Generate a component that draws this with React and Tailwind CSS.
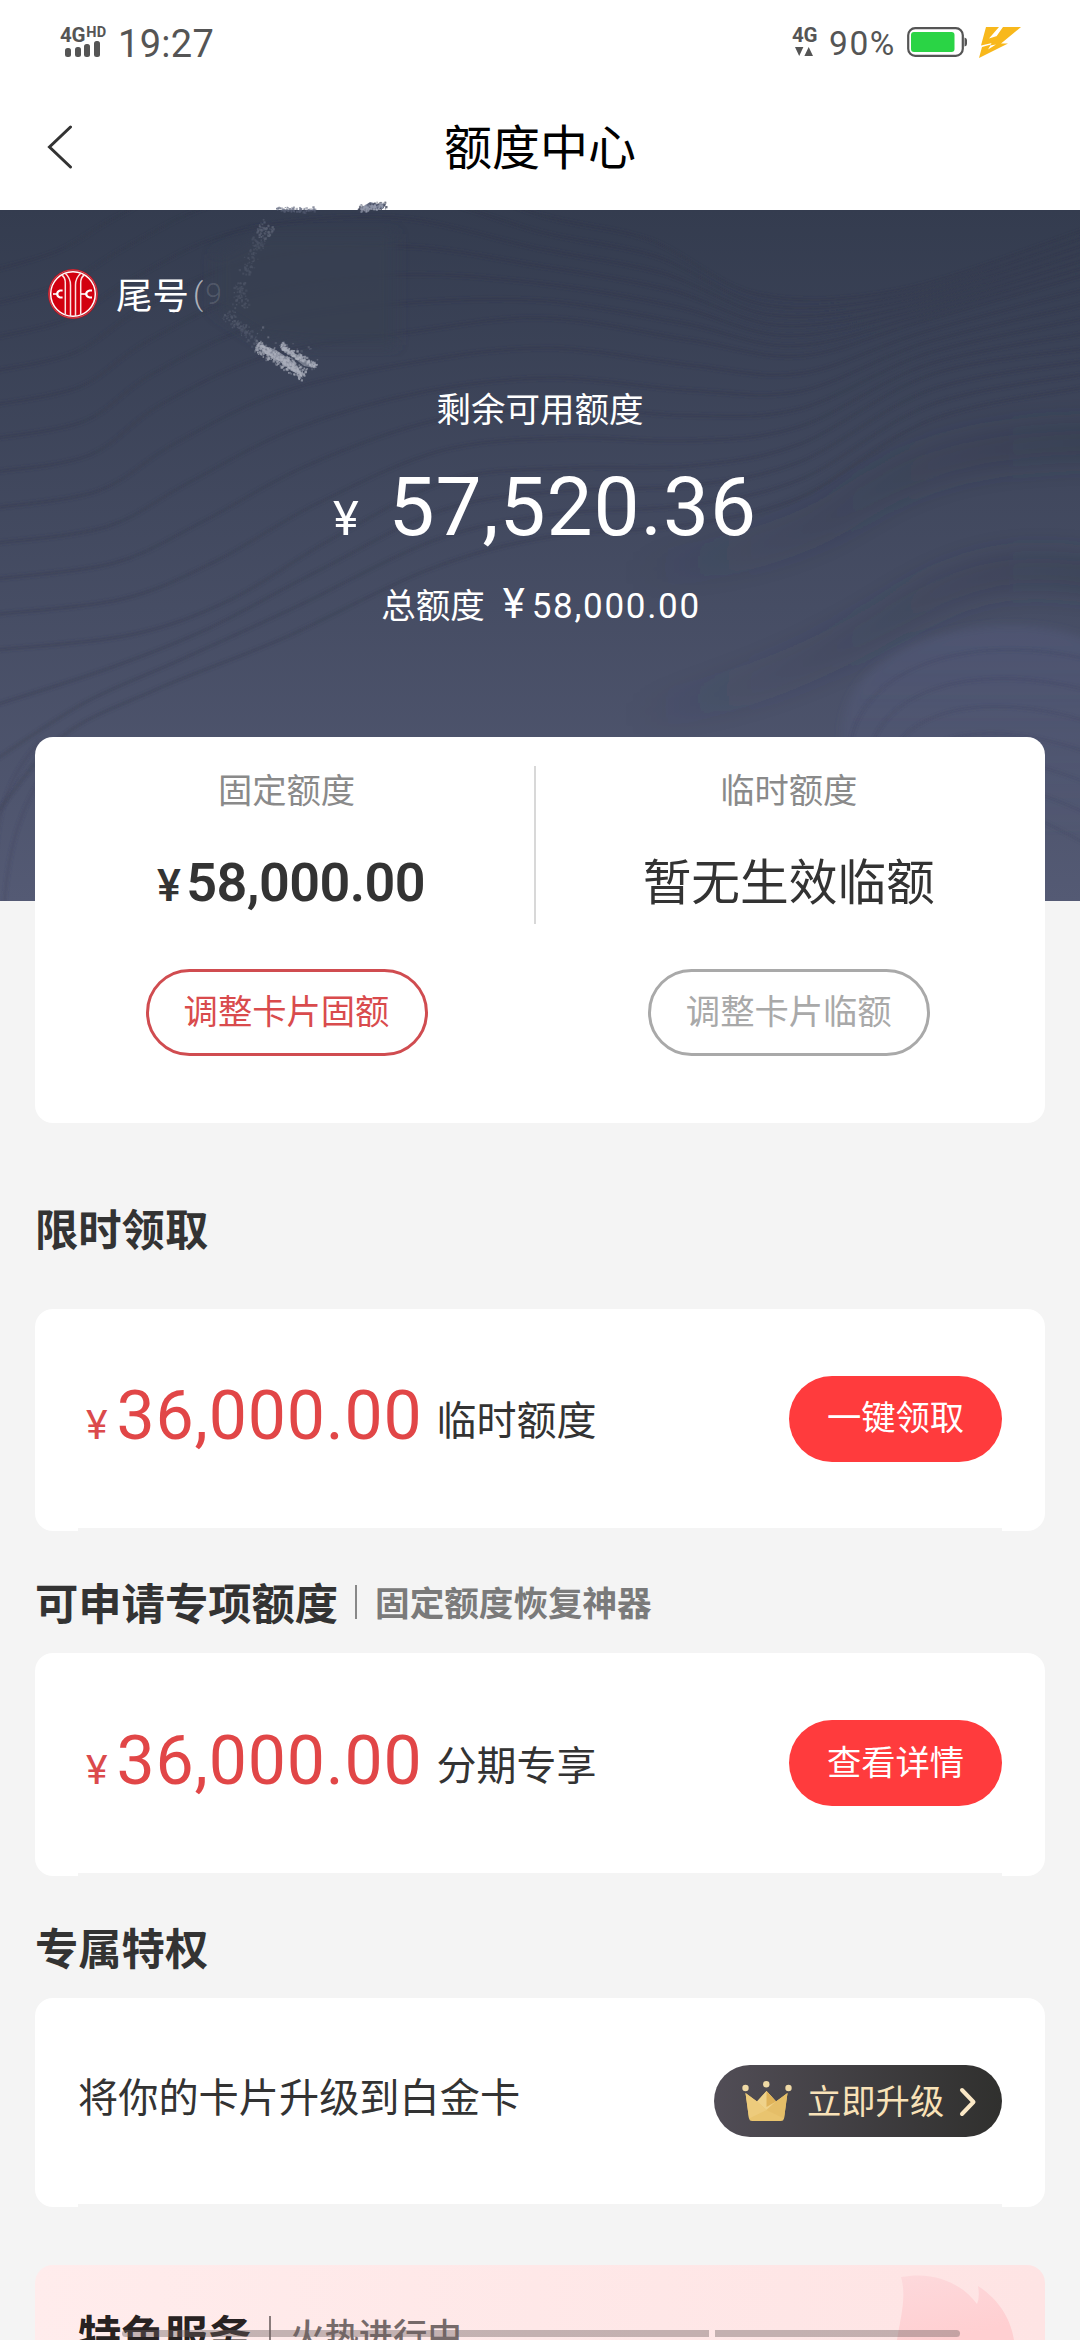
import React from "react";

const CJK = 'font-["Noto_Sans_CJK_SC",sans-serif]';
const NUM = 'font-["Roboto",sans-serif]';

function lerpPoints(a, b, t) {
  return a.map(([x, y], i) => [x + (b[i][0] - x) * t, y + (b[i][1] - y) * t]);
}

function smooth(points) {
  let d = `M${points[0][0]} ${points[0][1]}`;
  for (let i = 0; i < points.length - 1; i++) {
    const p0 = points[i - 1] || points[i];
    const p1 = points[i];
    const p2 = points[i + 1];
    const p3 = points[i + 2] || p2;
    d += ` C${p1[0] + (p2[0] - p0[0]) / 6} ${p1[1] + (p2[1] - p0[1]) / 6} ${p2[0] - (p3[0] - p1[0]) / 6} ${p2[1] - (p3[1] - p1[1]) / 6} ${p2[0]} ${p2[1]}`;
  }
  return d;
}

const CURVE_A = [[-5, 60], [60, 40], [120, 5], [220, -40], [380, -50], [540, 5], [650, 30], [760, 85], [900, 80], [1085, 20]];
const CURVE_B = [[-5, 262], [90, 245], [160, 195], [270, 145], [410, 122], [545, 108], [690, 130], [800, 146], [920, 112], [1085, 65]];
const CURVE_C = [[-5, 440], [130, 425], [230, 390], [330, 330], [450, 270], [570, 258], [690, 256], [800, 234], [930, 165], [1085, 138]];
const CURVE_D = [[-5, 660], [40, 560], [130, 510], [270, 460], [420, 390], [540, 350], [680, 335], [800, 305], [930, 225], [1085, 190]];

function Waves() {
  const lines = [];
  for (let i = 0; i < 6; i++) lines.push(smooth(lerpPoints(CURVE_A, CURVE_B, i / 6)));
  for (let i = 0; i < 5; i++) lines.push(smooth(lerpPoints(CURVE_B, CURVE_C, i / 5)));
  for (let i = 0; i < 4; i++) lines.push(smooth(lerpPoints(CURVE_C, CURVE_D, i / 4)));
  return (
    <svg className="absolute inset-0 h-full w-full" viewBox="0 0 1080 691" preserveAspectRatio="none">
      <defs>
        <linearGradient id="ridge" gradientUnits="userSpaceOnUse" x1="620" y1="0" x2="1080" y2="0">
          <stop offset="0" stopColor="#2f3548" stopOpacity="0" />
          <stop offset="1" stopColor="#2f3548" stopOpacity="0.32" />
        </linearGradient>
        <linearGradient id="swirl" x1="0" y1="0" x2="0" y2="1">
          <stop offset="0" stopColor="#5b6288" stopOpacity="0.35" />
          <stop offset="1" stopColor="#5b6288" stopOpacity="0.05" />
        </linearGradient>
        <filter id="soft"><feGaussianBlur stdDeviation="1.5" /></filter>
        <filter id="softer"><feGaussianBlur stdDeviation="4" /></filter>
        <filter id="shade" x="-20%" y="-40%" width="140%" height="180%"><feGaussianBlur stdDeviation="12" /></filter>
      </defs>
      <g fill="none" stroke="#2a3044" strokeOpacity="0.26" strokeWidth="4" filter="url(#soft)">
        {lines.map((d, i) => <path key={i} d={d} />)}
      </g>
      <g fill="none" stroke="url(#ridge)" strokeWidth="40" filter="url(#shade)">
        <path d="M600 368C720 352 790 332 840 302C905 260 960 232 1110 232" />
        <path d="M600 512C730 488 810 458 905 400C970 362 1020 352 1110 368" />
      </g>
      <path d="M842 540C835 480 880 440 940 425C1000 410 1050 414 1090 430V620H860Z" fill="url(#swirl)" filter="url(#softer)" />
      <g fill="none" stroke="#363d57" strokeOpacity="0.2" strokeWidth="3.5" filter="url(#soft)">
        {[0, 1, 2, 3, 4, 5, 6].map((i) => (
          <path key={i} d={`M${850 + i * 18} ${545 + i * 12}C${850 + i * 20} ${465 + i * 18} ${960 + i * 10} ${418 + i * 30} 1090 ${450 + i * 31}`} />
        ))}
      </g>
      <g fill="none" stroke="#363d57" strokeOpacity="0.25" strokeWidth="3.5" filter="url(#soft)">
        <path d="M-4 640C0 580 20 555 40 530" />
        <path d="M4 700C8 630 24 590 50 555" />
      </g>
    </svg>
  );
}

function speckles(seed, count, x0, y0, x1, y1, spread) {
  let s = seed;
  const rnd = () => {
    s = (s * 16807) % 2147483647;
    return s / 2147483647;
  };
  const out = [];
  for (let i = 0; i < count; i++) {
    const t = rnd();
    const off = (rnd() + rnd() - 1) * spread;
    const len = Math.hypot(x1 - x0, y1 - y0);
    out.push([
      x0 + (x1 - x0) * t - ((y1 - y0) / len) * off,
      y0 + (y1 - y0) * t + ((x1 - x0) / len) * off,
      1 + rnd() * 1.4,
      0.4 + rnd() * 0.6,
    ]);
  }
  return out;
}

function Speckle({ dots, fill, opacity }) {
  return (
    <g fill={fill} opacity={opacity}>
      {dots.map(([x, y, r, o], i) => <rect key={i} x={x} y={y} width={r} height={r} opacity={o} />)}
    </g>
  );
}

function Smudge() {
  return (
    <svg className="absolute left-[180px] top-[-14px] h-[200px] w-[240px]" viewBox="180 196 240 200">
      <defs>
        <filter id="patch"><feGaussianBlur stdDeviation="7" /></filter>
      </defs>
      <path d="M215 255L260 234H395V345H318L262 340L215 310Z" fill="#383f51" opacity="0.8" filter="url(#patch)" />
      <Speckle dots={speckles(11, 60, 258, 226, 270, 234, 9)} fill="#8a90a1" opacity="0.4" />
      <Speckle dots={speckles(21, 90, 258, 238, 246, 274, 9)} fill="#8a90a1" opacity="0.2" />
      <Speckle dots={speckles(31, 70, 240, 282, 240, 308, 9)} fill="#8a90a1" opacity="0.22" />
      <Speckle dots={speckles(41, 100, 226, 312, 256, 342, 8)} fill="#8a90a1" opacity="0.28" />
      <path d="M256 343L268 347L276 350L288 358L300 370L303 378L298 374L290 370L278 360L266 354Z" fill="#a3a7b5" opacity="0.7" />
      <path d="M279 345L290 350L302 358L316 364L314 368L304 366L294 358L284 352Z" fill="#a3a7b5" opacity="0.55" />
      <Speckle dots={speckles(51, 340, 256, 345, 304, 374, 8)} fill="#b4b8c4" opacity="0.8" />
      <Speckle dots={speckles(61, 130, 280, 345, 316, 366, 4)} fill="#b9bdc9" opacity="0.8" />
      <Speckle dots={speckles(71, 40, 256, 340, 318, 360, 18)} fill="#a3a7b5" opacity="0.4" />
      <path d="M357 210L364 206L370 202L378 204L386 204L383 209Z" fill="#6c738a" />
      <Speckle dots={speckles(81, 90, 358, 209, 385, 204, 5)} fill="#3a4053" opacity="0.8" />
      <Speckle dots={speckles(91, 90, 360, 208, 382, 205, 4)} fill="#9aa0b2" opacity="0.9" />
      <Speckle dots={speckles(101, 90, 276, 209, 316, 209, 3)} fill="#596077" opacity="0.8" />
    </svg>
  );
}

function StatusBar() {
  return (
    <div className={`flex h-[84px] shrink-0 items-start justify-between pl-[60px] pr-[58px] pt-[27px] text-[#555] ${NUM}`}>
      <div className="flex">
        <div className="w-[58px]">
          <div className="flex h-[15px] items-start font-bold">
            <span className="text-[20.5px] leading-[16px] tracking-[-0.3px]">4G</span>
            <span className="pl-px text-[14.5px] leading-[11px] tracking-[0.4px]">HD</span>
          </div>
          <div className="ml-[5px] flex h-[15px] items-end gap-[3.6px]">
            <i className="h-[9px] w-[6px] rounded-[2.5px] bg-[#555]" />
            <i className="h-[10px] w-[6px] rounded-[2.5px] bg-[#555]" />
            <i className="h-[13px] w-[6px] rounded-[2.5px] bg-[#555]" />
            <i className="h-[16px] w-[6px] rounded-[2.5px] bg-[#555]" />
          </div>
        </div>
        <span className="pt-[2px] text-[38px] leading-[30px] tracking-[0.3px]">19:27</span>
      </div>
      <div className="flex">
        <div className="w-[37px]">
          <div className="text-[20.5px] font-bold leading-[16px] tracking-[-0.3px]">4G</div>
          <svg className="ml-[3px] mt-[4px] h-[9px] w-[18px]" viewBox="0 0 18 9" fill="#555"><path d="M0 0H8.4L4.2 9Z M9.4 9H18L13.7 0Z" /></svg>
        </div>
        <span className="w-[78px] pt-px text-[33.5px] leading-[31px] tracking-[1.6px]">90%</span>
        <svg className="h-[30px] w-[61px]" viewBox="0 0 61 30">
          <rect x="1.2" y="1.2" width="54.6" height="27.6" rx="7" fill="#fff" stroke="#555" strokeWidth="2.2" />
          <rect x="4" y="5" width="43.5" height="20" rx="3" fill="#2ad445" />
          <path d="M57.5 10.5Q60 11 60 13V17Q60 19 57.5 19.5Z" fill="#555" />
        </svg>
        <svg className="ml-[11px] h-[31px] w-[43px]" viewBox="0 0 43 31" fill="#f8b81c">
          <path d="M7 0H20L10 11.5L18 9L13 16L2 18.5Z M24 0H42L22 16.5H29L0 31L3 20L12 17.5L9 22.5L17 17.5L11 18.5Z" />
        </svg>
      </div>
    </div>
  );
}

function NavBar() {
  return (
    <div className="grid h-[126px] shrink-0 grid-cols-[200px_1fr_200px] items-start">
      <svg className="ml-[47px] mt-[41px] h-[44px] w-[26px]" viewBox="0 0 26 44" fill="none" stroke="#333" strokeWidth="3" strokeLinecap="round">
        <path d="M23.5 2L2.5 22L23.5 42" />
      </svg>
      <h1 className="mt-[28px] text-center text-[48px] leading-[64px] text-black">额度中心</h1>
    </div>
  );
}

function BankLogo() {
  return (
    <svg className="h-[52px] w-[52px]" viewBox="0 0 52 52" fill="none">
      <circle cx="26" cy="26" r="25" fill="#b80f1c" />
      <circle cx="26" cy="26" r="24" stroke="#e0606a" strokeWidth="0.7" />
      <circle cx="26" cy="26" r="22.3" fill="#d2000f" stroke="#fff" strokeWidth="1.5" />
      <g stroke="#fbe3e3" strokeWidth="1.5">
        <path d="M14.5 7Q18.3 9 18.3 15V46.5" />
        <path d="M18 5Q23.5 10 23.5 17V48" />
        <path d="M37.5 7Q33.7 9 33.7 15V46.5" />
        <path d="M34 5Q28.5 10 28.5 17V48" />
      </g>
      <g stroke="#fff" strokeWidth="2.2">
        <path d="M15.6 22.5H13Q10.2 23.5 10.2 26T13 29.5H15.6" />
        <path d="M45 22.5H42.6Q39.2 23.5 39.2 26T42.6 29.5H45" />
        <path d="M6 26H10" strokeWidth="1.6" />
        <path d="M34 26H39" strokeWidth="1.6" />
      </g>
    </svg>
  );
}

function Hero() {
  return (
    <section className="relative h-[691px] shrink-0 bg-linear-to-b from-[#343c4f] to-[#545a74] text-white">
      <Waves />
      <Smudge />
      <div className="relative flex h-[168px] items-center pl-[47px]">
        <BankLogo />
        <div className="flex items-center pl-[17px] text-[36.5px] leading-[50px]">
          尾号
          <span className={`pl-[4px] text-[32px] font-light text-white/60 ${NUM}`}>(</span>
          <span className={`pl-[2px] text-[30px] font-light text-white/15 ${NUM}`}>9</span>
        </div>
      </div>
      <div className="relative flex flex-col items-center">
        <p className="mt-[4px] text-[34.5px] leading-[50px]">剩余可用额度</p>
        <p className={`mt-[25px] flex items-baseline pl-[10px] text-[82px] leading-[100px] tracking-[0.9px] ${NUM}`}>
          <span className="mr-[29px] text-[49px]">¥</span>57,520.36
        </p>
        <p className="mt-[9px] flex items-baseline pl-[2px] text-[34.5px] leading-[50px]">
          总额度
          <span className={`ml-[18px] mr-[7px] text-[42px] ${NUM}`}>¥</span>
          <span className={`text-[35px] tracking-[1.7px] ${NUM}`}>58,000.00</span>
        </p>
      </div>
    </section>
  );
}

function LimitColumn({ label, children, action, tone }) {
  return (
    <div className="flex flex-1 flex-col items-center">
      <p className="text-[34.3px] leading-[50px] text-[#8a8a8a]">{label}</p>
      <div className="mt-[34px] flex h-[64px] items-center justify-center text-[#333]">{children}</div>
      <button className={`mt-[58px] h-[87px] w-[282px] rounded-full border-3 pb-[8px] text-[34.3px] leading-[50px] ${tone}`}>{action}</button>
    </div>
  );
}

function SummaryCard() {
  return (
    <section className="relative mx-[35px] -mt-[164px] flex h-[386px] shrink-0 rounded-[18px] bg-white pt-[26px]">
      <div className="flex w-[499px] pl-[4px]">
        <LimitColumn label="固定额度" action="调整卡片固额" tone="border-[#d04c50] text-[#d94b4d]">
          <p className={`flex items-baseline pl-[9px] pt-[10px] text-[54px] font-semibold leading-[64px] tracking-[-0.6px] ${NUM}`}>
            <span className="mr-[6px] text-[45px] font-medium">¥</span>58,000.00
          </p>
        </LimitColumn>
      </div>
      <div className="mt-[3px] h-[158px] w-[1.5px] bg-[#d8d8d8]" />
      <div className="flex flex-1 pr-[3px]">
        <LimitColumn label="临时额度" action="调整卡片临额" tone="border-[#a9a9a9] text-[#a9a9a9]">
          <p className="text-[48.7px] leading-[64px]">暂无生效临额</p>
        </LimitColumn>
      </div>
    </section>
  );
}

function Heading({ title, note, className }) {
  return (
    <div className={`flex shrink-0 items-center px-[35px] ${className}`}>
      <h2 className="text-[43.3px] font-bold leading-[56px] text-[#333]">{title}</h2>
      {note && <i className="ml-[17px] mt-[2px] h-[34px] w-[2px] bg-[#888]" />}
      {note && <span className="ml-[18px] text-[34.6px] font-bold leading-[50px] text-[#7a7a7a]">{note}</span>}
    </div>
  );
}

function Card({ className, children }) {
  return (
    <section className={`relative mx-[35px] flex shrink-0 items-center justify-between rounded-[18px] bg-white pl-[43px] pr-[43px] ${className}`}>
      {children}
      <i className="absolute bottom-0 left-[43px] right-[43px] h-[3px] bg-[#f4f4f4]" />
    </section>
  );
}

function OfferCard({ amount, label, action, className }) {
  return (
    <Card className={className}>
      <p className="mb-[7px] flex items-baseline pl-[8px] text-[#333]">
        <span className={`mr-[9px] text-[41px] text-[#db4a4c] ${NUM}`}>¥</span>
        <span className={`text-[68px] leading-[80px] tracking-[0.8px] text-[#e14647] ${NUM}`}>{amount}</span>
        <span className="relative -top-[4px] ml-[14px] text-[40px] leading-[56px]">{label}</span>
      </p>
      <button className="mb-[3px] h-[86px] w-[213px] rounded-full bg-[#ff3b3d] pb-[7px] text-[34.3px] leading-[50px] text-white">{action}</button>
    </Card>
  );
}

function Crown() {
  return (
    <svg className="h-[41px] w-[50px]" viewBox="0 0 50 41">
      <path d="M3.5 12L15 20.5L24.5 10L34 20.5L45.5 12L42 37.5Q41.5 40 39 40H10Q7.5 40 7 37.5Z" fill="#e9c46f" />
      <path d="M24.5 10L34 20.5L24.5 29L15 20.5Z" fill="#efd28a" />
      <path d="M24.5 10L34 20.5L24.5 26Z" fill="#dfb258" />
      <path d="M3.5 12L15 20.5L24.5 29L7 37.5Z" fill="#edcb7c" />
      <path d="M45.5 12L34 20.5L24.5 29L42 37.5Z" fill="#e5be68" />
      <g fill="#efd9a5"><circle cx="3.5" cy="7" r="3.2" /><circle cx="24.3" cy="3.3" r="3.2" /><circle cx="46.5" cy="7" r="3.2" /></g>
    </svg>
  );
}

function PromoCard() {
  return (
    <section className="relative mx-[35px] mt-[58px] h-[75px] shrink-0 overflow-hidden rounded-t-[18px] bg-linear-to-r from-[#ffecec] to-[#fee4e4]">
      <svg className="absolute right-[28px] top-[10px] h-[65px] w-[124px]" viewBox="0 0 124 65">
        <defs>
          <linearGradient id="flame" x1="0" y1="0" x2="0.4" y2="1">
            <stop offset="0" stopColor="#fdd9dc" />
            <stop offset="1" stopColor="#ffcfd1" />
          </linearGradient>
        </defs>
        <path d="M8 2C45 -5 72 12 84 29Q87 22 85 11C108 26 118 46 121 65H4C7 45 14 22 8 2Z" fill="url(#flame)" />
      </svg>
      <div className="relative flex items-center pl-[43px] pt-[38px]">
        <h2 className="text-[43.3px] font-bold leading-[60px] text-[#282222]">特色服务</h2>
        <i className="ml-[18px] h-[34px] w-[2px] bg-[#8a7c7c]" />
        <span className="ml-[19px] text-[34.3px] font-medium leading-[50px] text-[#766a6a]">火热进行中</span>
      </div>
      <div className="absolute left-[87px] top-[65px] flex h-[7px] w-[838px] gap-[6px]">
        <i className="w-[587px] rounded-l-full bg-[#6b5f5f]/40" />
        <i className="flex-1 rounded-r-full bg-[#6b5f5f]/40" />
      </div>
    </section>
  );
}

export default function App() {
  return (
    <main className={`flex h-[2340px] w-[1080px] flex-col overflow-hidden bg-[#f4f4f4] ${CJK}`}>
      <header className="flex shrink-0 flex-col bg-white">
        <StatusBar />
        <NavBar />
      </header>
      <Hero />
      <SummaryCard />
      <Heading title="限时领取" className="mt-[76px] h-[56px]" />
      <OfferCard amount="36,000.00" label="临时额度" action="一键领取" className="mt-[54px] h-[222px]" />
      <Heading title="可申请专项额度" note="固定额度恢复神器" className="mt-[42px] h-[56px]" />
      <OfferCard amount="36,000.00" label="分期专享" action="查看详情" className="mt-[24px] h-[223px]" />
      <Heading title="专属特权" className="mt-[42px] h-[56px]" />
      <Card className="mt-[24px] h-[209px]">
        <p className="mb-[15px] text-[40.2px] leading-[56px] text-[#333]">将你的卡片升级到白金卡</p>
        <button className="mb-[3px] flex h-[72px] w-[288px] items-center rounded-full bg-linear-to-r from-[#514d56] to-[#30302e] pl-[28px]">
          <Crown />
          <span className="mb-[5px] ml-[15px] text-[34.3px] leading-[50px] text-[#f9e2b8]">立即升级</span>
          <svg className="ml-[14px] mt-px h-[30px] w-[20px]" viewBox="0 0 20 30" fill="none" stroke="#fbe8c6" strokeWidth="4" strokeLinecap="round" strokeLinejoin="round">
            <path d="M4 3L15.5 15L4 27" />
          </svg>
        </button>
      </Card>
      <PromoCard />
    </main>
  );
}
